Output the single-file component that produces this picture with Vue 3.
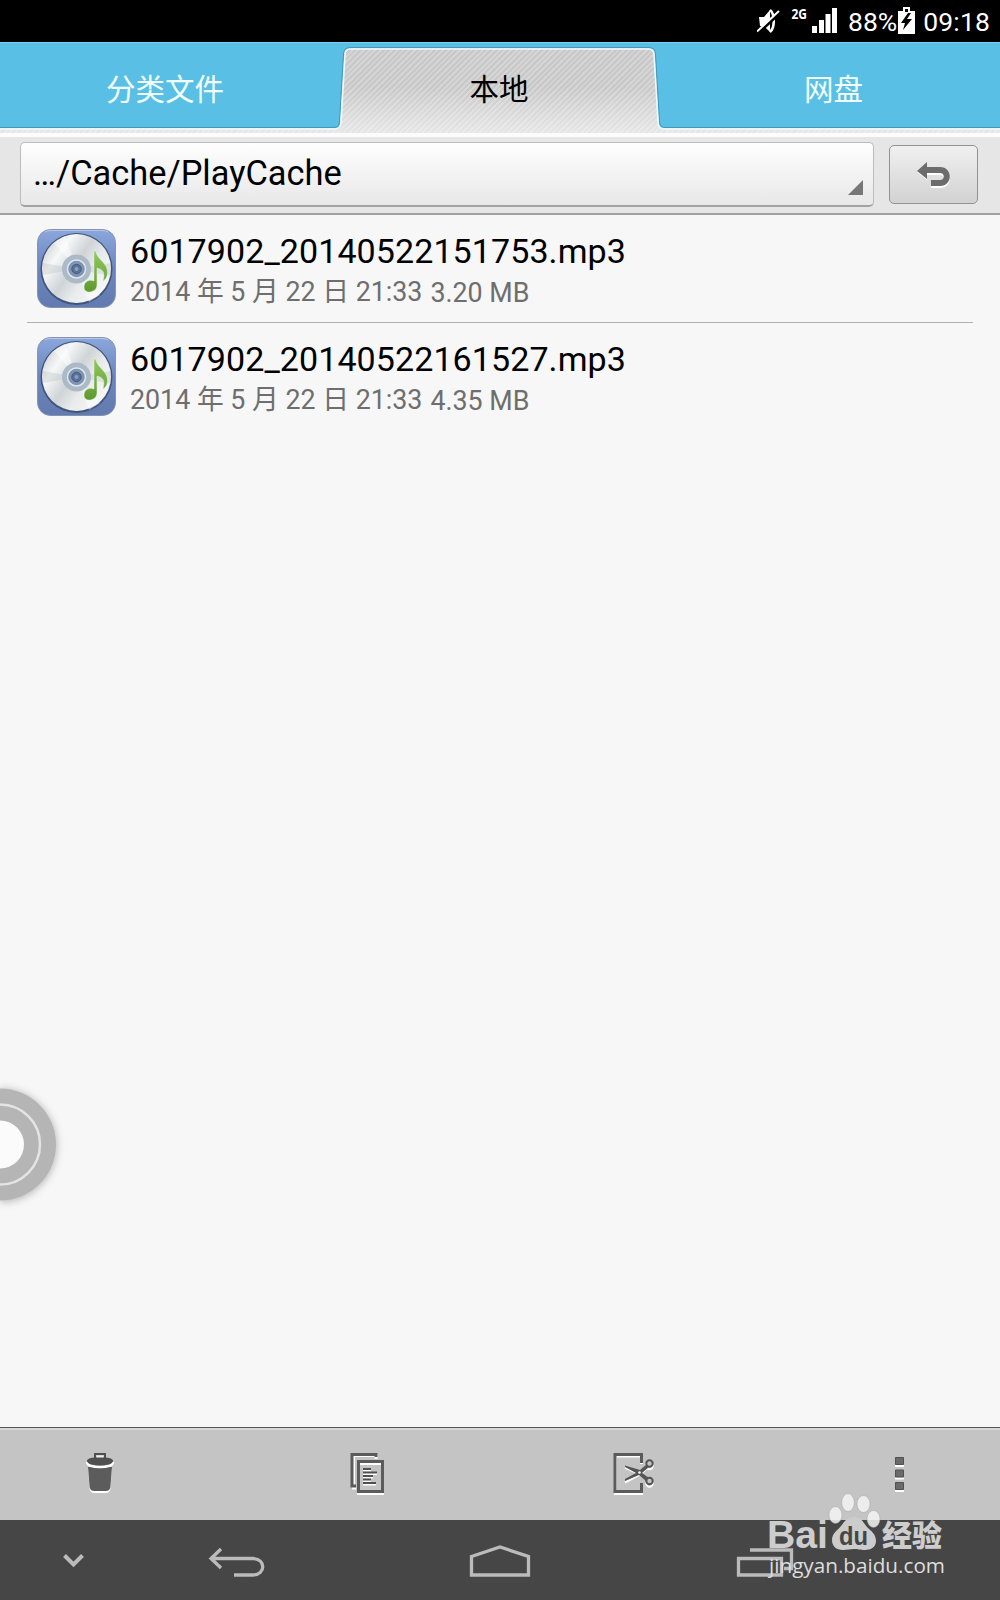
<script setup>
const tabs = [
  { id: 'category', label: '分类文件' },
  { id: 'local', label: '本地', active: true },
  { id: 'cloud', label: '网盘' },
]

const files = [
  { name: '6017902_20140522151753.mp3', date: '2014 年 5 月 22 日 21:33', size: '3.20 MB' },
  { name: '6017902_20140522161527.mp3', date: '2014 年 5 月 22 日 21:33', size: '4.35 MB' },
]
</script>

<template>
  <div class="screen">
    <div class="status-bar">
      <svg class="mute" width="24" height="26" viewBox="0 0 24 26">
        <path d="M2 9h5l6-7v22l-6-6H3z" fill="#fff" />
        <path d="M13 2c5 4 5 18 0 22" fill="none" stroke="#fff" stroke-width="2.6" />
        <path d="M1 25 23 5" stroke="#000" stroke-width="3" />
        <path d="M0 23.500 22 3" stroke="#fff" stroke-width="2" />
      </svg>
      <svg class="network" width="17" height="20" viewBox="0 0 17 20">
        <text x="0.500" y="15.500" textLength="15.500" lengthAdjust="spacingAndGlyphs">2G</text>
      </svg>
      <svg class="signal" width="26" height="26" viewBox="0 0 26 26">
        <path d="M0 19h5v7H0zM7 13h5v13H7zM13.500 7h5v19h-5zM20 1h5v25h-5z" fill="#fff" />
      </svg>
      <span class="percent">88%</span>
      <svg class="battery" width="17" height="27" viewBox="0 0 17 27">
        <path d="M0 4h5V0h7v4h5v23H0z" fill="#fff" />
        <path d="M7 2h3v3H7z" fill="#000" />
        <path d="M10 6 3 16h4l-2 7 9-11H9l4-6z" fill="#000" />
      </svg>
      <span class="clock">09:18</span>
    </div>

    <header class="tabs">
      <svg class="tabs-shape" width="1000" height="90" viewBox="0 0 1000 90">
        <path
          d="M0 0H1000V87H664Q659 87 659 81L655 13Q655 7 649 7H350Q344 7 344 13L340 81Q340 87 335 87H0Z"
          fill="#5abfe4"
        />
        <path d="M0 86.500H334Q339.500 86.500 339.500 80L343.500 13Q344 6.500 350 6.500H649Q655 6.500 655.500 13L659.500 80Q659.500 86.500 665 86.500H1000" fill="none" stroke="#4599b8" />
        <path d="M0 88H335Q341 88 341 81L345 14Q345 8 351 8H648Q654 8 654 14L658 81Q658 88 664 88H1000" fill="none" stroke="#eafaff" stroke-width="1.500" />
        <path d="M0 1.500H1000" stroke="#78d5f2" />
      </svg>
      <div v-for="tab in tabs" :key="tab.id" class="tab" :class="[tab.id, { active: tab.active }]">
        {{ tab.label }}
      </div>
    </header>

    <div class="path-bar">
      <div class="path-box">
        <span>…/Cache/PlayCache</span>
        <svg class="corner" width="15" height="15" viewBox="0 0 15 15">
          <path d="M15 0v15H0z" fill="#777" />
        </svg>
      </div>
      <button class="up-button">
        <svg width="34" height="27" viewBox="0 0 34 27">
          <path d="M0 11 10 2v6h13c13 0 13 19 0 19h-9v-6h9c5 0 5-7 0-7H10v5z" fill="#fff" />
          <path d="M0 10 10 1v5h13c13 0 13 19 0 19h-9v-6h9c5 0 5-7 0-7H10v6z" fill="#6c6c6c" />
        </svg>
      </button>
    </div>

    <main class="file-list">
      <div v-for="file in files" :key="file.name" class="file-row">
        <svg class="file-icon" width="80" height="80" viewBox="0 0 80 80">
          <defs>
            <linearGradient id="tile" x1="0" y1="0" x2="0" y2="1">
              <stop offset="0" stop-color="#8ba7dc" />
              <stop offset=".5" stop-color="#6c86bc" />
              <stop offset="1" stop-color="#627aaf" />
            </linearGradient>
            <linearGradient id="disc" x1="0" y1=".15" x2="1" y2=".85">
              <stop offset="0" stop-color="#c8cccf" />
              <stop offset=".23" stop-color="#f7f8f8" />
              <stop offset=".46" stop-color="#cfd4d7" />
              <stop offset=".65" stop-color="#e9ebec" />
              <stop offset="1" stop-color="#fafafa" />
            </linearGradient>
            <linearGradient id="note" x1="0" y1="0" x2="0" y2="1">
              <stop offset="0" stop-color="#91c95d" />
              <stop offset="1" stop-color="#5d992f" />
            </linearGradient>
          </defs>
          <rect x=".5" y=".5" width="78" height="78" rx="13" fill="url(#tile)" stroke="#8593b0" />
          <path d="M8 3Q10 1.500 14 1.500H65Q69 1.500 71 3" fill="none" stroke="#b5c7e9" />
          <circle cx="39.500" cy="40" r="36" fill="#405379" />
          <circle cx="39.500" cy="39.500" r="34.500" fill="url(#disc)" />
          <path d="M40 40 6 34v12zM40 40 74 34v13z" fill="#b9bfc3" opacity=".35" />
          <path d="M40 40 17 14 28 7zM40 40 52 73 63 66z" fill="#fff" opacity=".45" />
          <circle cx="39.500" cy="40" r="14.500" fill="#acb9c6" />
          <circle cx="39.500" cy="40" r="9" fill="#8093b3" stroke="#e0e7ed" stroke-width="1.500" />
          <circle cx="39.500" cy="40" r="4.700" fill="#5c7196" stroke="#445c84" />
          <circle cx="39.500" cy="40" r="2" fill="#8c9dbd" />
          <path
            d="M57 22h1.500c2 9 12 12 12 21 0 4-1 7-4.500 9 2-8 1-11-6-13v17c0 8-13 10-13 2 0-6 6-8 10-6z"
            fill="url(#note)"
            stroke="#e9f0e5"
            stroke-width=".5"
          />
        </svg>
        <div class="file-info">
          <div class="file-name">{{ file.name }}</div>
          <div class="file-meta">
            <span class="file-date">{{ file.date }}</span>
            <span class="file-size">{{ file.size }}</span>
          </div>
        </div>
      </div>
    </main>

    <footer class="toolbar">
      <svg class="tool trash" width="28" height="42" viewBox="0 0 28 42">
        <path d="M2 17h24l-1.500 19q0 5-5 5h-11q-5 0-5-5z" fill="#fff" />
        <path d="M2 15h24l-1.500 19q0 5-5 5h-11q-5 0-5-5z" fill="#5c5c5c" />
        <path d="M1 10q0 5 13 5t13-5" fill="none" stroke="#fff" stroke-width="2.500" />
        <path d="M1 9q0-2 4-3 9-2 18 0 4 1 4 3c0 6-26 6-26 0z" fill="#505050" />
        <path d="M9 7V2h10v5" fill="none" stroke="#505050" stroke-width="2" />
        <path d="M10.500 3.500h7v2h-7z" fill="#eee" />
      </svg>
      <svg class="tool copy" width="36" height="44" viewBox="0 0 36 44">
        <g fill="none" stroke-width="3">
          <path d="M26 7V3.500H3.500V36H6" stroke="#fff" />
          <path d="M26 5V2.500H2V34H6" stroke="#5b5b5b" />
          <path d="M8.500 11.500h24v30h-24z" stroke="#fff" />
          <path d="M8.500 9.500h24v30h-24z" stroke="#5b5b5b" />
        </g>
        <path d="M13 18.500h8M13 22h14M13 25.500h10M13 29h8M13 32.500h13" stroke="#fff" stroke-width="2" />
        <path d="M13 17h8M13 20.500h14M13 24h10M13 27.500h8M13 31h13" stroke="#505050" stroke-width="2" />
      </svg>
      <svg class="tool cut" width="42" height="44" viewBox="0 0 42 44">
        <path d="M28.500 12V4H2.500v37.500h26V32" fill="none" stroke="#fff" stroke-width="3" />
        <path d="M28.500 11V2.500H2V39.500h26.500V31" fill="none" stroke="#5b5b5b" stroke-width="3" />
        <g transform="translate(0 1.500)" fill="none" stroke="#fff" stroke-width="2">
          <path d="m12 14 15 7 8-7M12 29l15-8 8 7" />
          <circle cx="36.500" cy="12.500" r="3.200" />
          <circle cx="36.500" cy="30" r="3.200" />
        </g>
        <path d="M12 13.500 27 18l7-6 2 3-7 6 7 5-2 4-8-7-14 6v-2l11-6-11-6z" fill="#555" />
        <circle cx="36.500" cy="11.500" r="3.200" fill="#c4c4c4" stroke="#555" stroke-width="2" />
        <circle cx="36.500" cy="29" r="3.200" fill="#c4c4c4" stroke="#555" stroke-width="2" />
        <circle cx="26.500" cy="20.500" r="1.300" fill="#fff" />
      </svg>
      <svg class="tool more" width="10" height="37" viewBox="0 0 10 37">
        <path d="M0 9h9v2H0zM0 21.500h9v2H0zM0 34h9v2H0z" fill="#fff" />
        <path d="M.5 1.500h8v7h-8zM.5 14h8v7h-8zM.5 26.500h8v7h-8z" fill="#6a6a6a" stroke="#505050" />
      </svg>
    </footer>

    <nav class="nav-bar">
      <svg width="1000" height="80" viewBox="0 0 1000 80" fill="none" stroke="#bbb" stroke-width="3.300">
        <path d="m64.500 35.500 9 9 9-9" stroke-width="4" />
        <path d="m221 29-10 9.500 10 9.500M211 38.500h42c13 0 13 16.500 0 16.500h-19" />
        <path d="M471.500 36.500 500 27l28.500 9.500V55h-57z" />
        <path d="M738.500 38.500h43V55h-43zM750 30h41.500v18.500H784" />
      </svg>
    </nav>

    <svg class="assist" width="66" height="130" viewBox="0 0 66 130">
      <circle cx="0" cy="63.500" r="56" fill="#b5b5b5" />
      <circle cx="0" cy="63.500" r="40" fill="none" stroke="#e4e4e4" stroke-width="2.500" />
      <circle cx="0" cy="63.500" r="24" fill="#fbfbfb" />
    </svg>

    <svg class="watermark" width="190" height="90" viewBox="0 0 190 90">
      <g fill="#f5f5f5" fill-opacity=".85" stroke="#999" stroke-opacity=".4">
        <ellipse cx="75.500" cy="25" rx="6.500" ry="8.500" />
        <ellipse cx="88" cy="12.500" rx="6.300" ry="9" />
        <ellipse cx="103.500" cy="14" rx="6.500" ry="8.500" />
        <ellipse cx="113.500" cy="29" rx="6.500" ry="8.500" />
      </g>
      <path
        d="M94 27c7 0 9 5 13 10 4 4 9 7 9 14 0 6-5 9-11 9-5 0-7-1-11-1s-7 1-11 1c-7 0-11-4-11-10 0-7 6-10 9-14 4-5 6-9 13-9z"
        fill="#ccc"
      />
      <text x="7" y="58" class="mark-bai" textLength="61" lengthAdjust="spacingAndGlyphs">Bai</text>
      <text x="79" y="54.500" class="mark-du" textLength="29" lengthAdjust="spacingAndGlyphs">du</text>
      <text x="122" y="56" class="mark-cn" textLength="60" lengthAdjust="spacingAndGlyphs">经验</text>
      <text x="9" y="82.500" class="mark-url" textLength="176" lengthAdjust="spacingAndGlyphs">jingyan.baidu.com</text>
    </svg>
  </div>
</template>

<style>
body {
  margin: 0;
}
</style>

<style scoped>
.screen {
  position: relative;
  display: flex;
  flex-direction: column;
  width: 1000px;
  height: 1600px;
  overflow: hidden;
  background: #f7f7f7;
  font-family: Roboto, 'Noto Sans CJK SC', sans-serif;
}

.screen svg {
  display: block;
  flex: none;
}

.status-bar {
  display: flex;
  flex: none;
  align-items: flex-start;
  justify-content: flex-end;
  box-sizing: border-box;
  height: 42px;
  padding-right: 10px;
  background: #000;
  color: #fff;
  font-size: 26.500px;
  line-height: 29px;
}

.mute {
  margin-top: 8px;
}

.network {
  margin: 3px 4px 0 10px;
  fill: #fff;
  font: bold 14px 'Open Sans', sans-serif;
}

.signal {
  margin-top: 7px;
}

.percent {
  margin: 7px 1px 0 10px;
}

.battery {
  margin-top: 7px;
}

.clock {
  margin: 7px 0 0 8px;
  letter-spacing: 0.150px;
}

.tabs {
  position: relative;
  display: flex;
  flex: none;
  box-sizing: border-box;
  height: 95px;
  overflow: hidden;
  border-bottom: 4px solid #fcfcfc;
  background:
    linear-gradient(rgba(255, 255, 255, 0) 50%, rgba(255, 255, 255, 0.55)),
    repeating-linear-gradient(135deg, #c8c8c8 0 2px, #d5d5d5 2px 4px);
}

.tabs-shape {
  position: absolute;
  top: -1px;
  left: 0;
}

.tab {
  position: relative;
  height: 91px;
  color: #f2ffff;
  font-family: 'Noto Sans CJK SC', sans-serif;
  font-size: 29.500px;
  line-height: 90px;
  text-align: center;
}

.category {
  width: 330px;
}

.local {
  width: 338px;
}

.cloud {
  width: 331px;
}

.tab.active {
  color: #000;
}

.path-bar {
  display: flex;
  flex: none;
  box-sizing: border-box;
  height: 78px;
  padding: 5px 22px 0 20px;
  border-bottom: 2px solid #a0a0a0;
  background: #e6e6e6;
}

.path-box {
  display: flex;
  justify-content: space-between;
  box-sizing: border-box;
  width: 854px;
  height: 65px;
  padding: 0 10px 0 12px;
  border: 1px solid #bcbcbc;
  border-bottom: 2px solid #a2a2a2;
  border-radius: 5px;
  background: linear-gradient(#fefefe, #e8e8e8);
  font-size: 34.400px;
  line-height: 61px;
}

.corner {
  align-self: flex-end;
  margin-bottom: 10px;
}

.up-button {
  display: flex;
  align-items: center;
  justify-content: center;
  box-sizing: border-box;
  width: 89px;
  height: 59px;
  margin: 3px 0 0 15px;
  padding: 0;
  border: 1.500px solid #929292;
  border-radius: 5px;
  background: linear-gradient(#f0f0f0, #d2d2d2);
}

.file-list {
  flex: 1;
  padding: 0 27px;
}

.file-row {
  display: flex;
  box-sizing: border-box;
  height: 108px;
  padding: 14px 0 0 10px;
}

.file-row:not(:last-child) {
  border-bottom: 1px solid #b0b0b0;
}

.file-info {
  margin-left: 13px;
}

.file-name {
  margin-top: 2px;
  color: #000;
  font-size: 34px;
  line-height: 40px;
  letter-spacing: 0.090px;
}

.file-meta {
  display: flex;
  margin-top: 3px;
  color: #6e6e6e;
  font-size: 26.800px;
  line-height: 36px;
}

.file-size {
  margin: 1px 0 0 8px;
}

.toolbar {
  display: flex;
  flex: none;
  box-sizing: border-box;
  height: 93px;
  border-top: 1px solid #555;
  background: #c4c4c4;
  box-shadow: inset 0 2px 0 #d8d8d8;
}

.tool {
  margin-top: 24px;
}

.trash {
  margin-left: 86px;
}

.copy {
  margin-left: 236px;
}

.cut {
  margin-left: 227px;
}

.more {
  margin: 28px 0 0 240px;
}

.nav-bar {
  flex: none;
  height: 80px;
  background: #464646;
}

.assist {
  position: absolute;
  top: 1081px;
  left: 0;
  filter: drop-shadow(0 1px 4px rgba(0, 0, 0, 0.3));
}

.watermark {
  position: absolute;
  top: 1490px;
  left: 760px;
}

.mark-bai {
  fill: #cdcdcd;
  font: bold 39px 'Liberation Sans', sans-serif;
}

.mark-du {
  fill: #464646;
  font: bold 25px 'Liberation Sans', sans-serif;
}

.mark-cn {
  fill: #cdcdcd;
  font: 900 30px 'Noto Sans CJK SC', sans-serif;
}

.mark-url {
  fill: #dedede;
  font: 20.500px 'Open Sans', sans-serif;
}
</style>
